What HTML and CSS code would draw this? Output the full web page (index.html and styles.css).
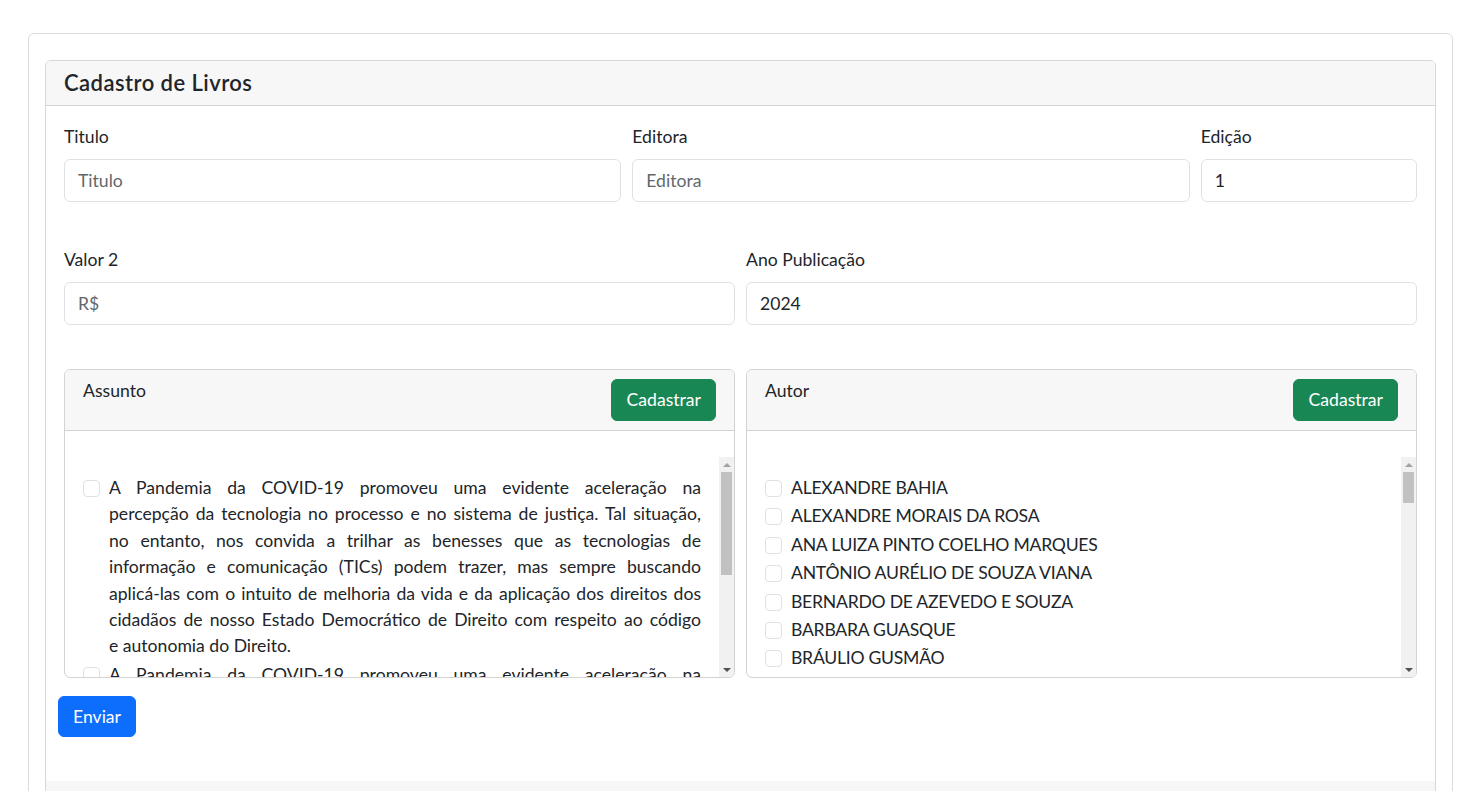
FILE: index.html
```html
<!DOCTYPE html>
<html lang="pt-BR">
<head>
<meta charset="utf-8">
<title>Cadastro de Livros</title>
<link rel="stylesheet" href="styles.css">
</head>
<body>
<div class="outer">
  <div class="card">
    <div class="card-header"><h5 class="title">Cadastro de Livros</h5></div>
    <div class="card-body">
      <div class="row">
        <div class="col c5">
          <label class="lbl">Titulo</label>
          <input class="ctl" type="text" placeholder="Titulo">
        </div>
        <div class="col c5">
          <label class="lbl">Editora</label>
          <input class="ctl" type="text" placeholder="Editora">
        </div>
        <div class="col c2">
          <label class="lbl">Edição</label>
          <input class="ctl" type="text" value="1">
        </div>
      </div>
      <div class="row">
        <div class="col c6">
          <label class="lbl">Valor 2</label>
          <input class="ctl" type="text" placeholder="R$">
        </div>
        <div class="col c6">
          <label class="lbl">Ano Publicação</label>
          <input class="ctl" type="text" value="2024">
        </div>
      </div>
      <div class="row lists">
        <div class="col c6">
          <div class="sub">
            <div class="sub-header">
              <span class="sub-title">Assunto</span>
              <button class="btn btn-green" type="button">Cadastrar</button>
            </div>
            <div class="sub-body">
              <div class="scroll-wrap">
                <div class="scroll">
                  <label class="check"><span class="box"></span><span class="txt"><span class="ln">A Pandemia da COVID-19 promoveu uma evidente aceleração na</span><span class="ln">percepção da tecnologia no processo e no sistema de justiça. Tal situação,</span><span class="ln">no entanto, nos convida a trilhar as benesses que as tecnologias de</span><span class="ln">informação e comunicação (TICs) podem trazer, mas sempre buscando</span><span class="ln">aplicá-las com o intuito de melhoria da vida e da aplicação dos direitos dos</span><span class="ln">cidadãos de nosso Estado Democrático de Direito com respeito ao código</span><span class="ln last">e autonomia do Direito.</span></span></label>
                  <label class="check"><span class="box"></span><span class="txt"><span class="ln">A Pandemia da COVID-19 promoveu uma evidente aceleração na</span><span class="ln">percepção da tecnologia no processo e no sistema de justiça. Tal situação,</span><span class="ln">no entanto, nos convida a trilhar as benesses que as tecnologias de</span><span class="ln">informação e comunicação (TICs) podem trazer, mas sempre buscando</span><span class="ln">aplicá-las com o intuito de melhoria da vida e da aplicação dos direitos dos</span><span class="ln">cidadãos de nosso Estado Democrático de Direito com respeito ao código</span><span class="ln last">e autonomia do Direito.</span></span></label>
                </div>
                <div class="vbar">
                  <span class="arrow up"></span>
                  <span class="thumb" style="height: 103px"></span>
                  <span class="track-fill"></span>
                  <span class="arrow down"></span>
                </div>
              </div>
            </div>
          </div>
        </div>
        <div class="col c6">
          <div class="sub">
            <div class="sub-header">
              <span class="sub-title">Autor</span>
              <button class="btn btn-green" type="button">Cadastrar</button>
            </div>
            <div class="sub-body">
              <div class="scroll-wrap">
                <div class="scroll names">
                  <label class="check"><span class="box"></span><span class="txt">ALEXANDRE BAHIA</span></label>
                  <label class="check"><span class="box"></span><span class="txt">ALEXANDRE MORAIS DA ROSA</span></label>
                  <label class="check"><span class="box"></span><span class="txt">ANA LUIZA PINTO COELHO MARQUES</span></label>
                  <label class="check"><span class="box"></span><span class="txt">ANTÔNIO AURÉLIO DE SOUZA VIANA</span></label>
                  <label class="check"><span class="box"></span><span class="txt">BERNARDO DE AZEVEDO E SOUZA</span></label>
                  <label class="check"><span class="box"></span><span class="txt">BARBARA GUASQUE</span></label>
                  <label class="check"><span class="box"></span><span class="txt">BRÁULIO GUSMÃO</span></label>
                  <label class="check"><span class="box"></span><span class="txt">CARLOS EDUARDO RIOS DO AMARAL</span></label>
                  <label class="check"><span class="box"></span><span class="txt">CAROLINA FERNANDES</span></label>
                  <label class="check"><span class="box"></span><span class="txt">CLÁUDIO LOPES</span></label>
                  <label class="check"><span class="box"></span><span class="txt">DANIEL BECKER</span></label>
                  <label class="check"><span class="box"></span><span class="txt">DIERLE NUNES</span></label>
                  <label class="check"><span class="box"></span><span class="txt">EDUARDO MAGRANI</span></label>
                  <label class="check"><span class="box"></span><span class="txt">ERIK NAVARRO WOLKART</span></label>
                  <label class="check"><span class="box"></span><span class="txt">FABIANO HARTMANN PEIXOTO</span></label>
                  <label class="check"><span class="box"></span><span class="txt">FERNANDA BRAGANÇA</span></label>
                  <label class="check"><span class="box"></span><span class="txt">FLÁVIO LUIZ YARSHELL</span></label>
                  <label class="check"><span class="box"></span><span class="txt">GABRIELA BUARQUE</span></label>
                  <label class="check"><span class="box"></span><span class="txt">GUSTAVO OSNA</span></label>
                  <label class="check"><span class="box"></span><span class="txt">HENRIQUE ALVES PINTO</span></label>
                  <label class="check"><span class="box"></span><span class="txt">ISABELA FERRARI</span></label>
                  <label class="check"><span class="box"></span><span class="txt">JANAÍNA ROLAND</span></label>
                  <label class="check"><span class="box"></span><span class="txt">JORDI NIEVA FENOLL</span></label>
                  <label class="check"><span class="box"></span><span class="txt">JOSÉ FERNANDO SIMÃO</span></label>
                  <label class="check"><span class="box"></span><span class="txt">JULIANA ABRUSIO</span></label>
                  <label class="check"><span class="box"></span><span class="txt">LEONARDO NETTO PARENTONI</span></label>
                  <label class="check"><span class="box"></span><span class="txt">LUIZ FUX</span></label>
                  <label class="check"><span class="box"></span><span class="txt">MARCO AURÉLIO CASTRO</span></label>
                  <label class="check"><span class="box"></span><span class="txt">MARIA CRISTINA VIEIRA</span></label>
                  <label class="check"><span class="box"></span><span class="txt">MARCUS VINICIUS PORTO</span></label>
                  <label class="check"><span class="box"></span><span class="txt">NATHALIA BAPTISTA</span></label>
                  <label class="check"><span class="box"></span><span class="txt">PAULO CEZAR NEVES JUNIOR</span></label>
                  <label class="check"><span class="box"></span><span class="txt">PEDRO FELIPE DE OLIVEIRA</span></label>
                  <label class="check"><span class="box"></span><span class="txt">RENATA SANTOS</span></label>
                  <label class="check"><span class="box"></span><span class="txt">RICARDO VILLAS BÔAS CUEVA</span></label>
                  <label class="check"><span class="box"></span><span class="txt">RODRIGO FUX</span></label>
                  <label class="check"><span class="box"></span><span class="txt">SÉRGIO RODAS</span></label>
                  <label class="check"><span class="box"></span><span class="txt">TAINÁ AGUIAR JUNQUILHO</span></label>
                  <label class="check"><span class="box"></span><span class="txt">TRÍCIA NAVARRO XAVIER CABRAL</span></label>
                  <label class="check"><span class="box"></span><span class="txt">VALTER SHUENQUENER DE ARAÚJO</span></label>
                  <label class="check"><span class="box"></span><span class="txt">VICTOR HUGO PAVONI</span></label>
                  <label class="check"><span class="box"></span><span class="txt">WILSON ENGELMANN</span></label>
                  <label class="check"><span class="box"></span><span class="txt">YURI FERREIRA</span></label>
                  <label class="check"><span class="box"></span><span class="txt">ZULMAR FACHIN</span></label>
                </div>
                <div class="vbar">
                  <span class="arrow up"></span>
                  <span class="thumb" style="height: 31px"></span>
                  <span class="track-fill"></span>
                  <span class="arrow down"></span>
                </div>
              </div>
            </div>
          </div>
        </div>
      </div>
      <button class="btn btn-blue" type="submit">Enviar</button>
    </div>
    <div class="card-footer"></div>
  </div>
</div>
</body>
</html>
```

FILE: styles.css
```css
html {
  overflow: hidden;
}
body {
  margin: 0;
  font-family: Lato, "Noto Sans", "Liberation Sans", sans-serif;
  font-size: 16px;
  line-height: 1.5;
  color: #212529;
  background: #fff;
}
.outer {
  margin: 33px 0 0 28px;
  width: 1425px;
  box-sizing: border-box;
  border: 1px solid #dadcde;
  border-radius: 6px;
  padding: 26px 16px 16px;
}
.card {
  border: 1px solid #d6d7d8;
  border-radius: 6px;
  overflow: hidden;
}
.card-header {
  background: #f7f7f7;
  border-bottom: 1px solid #d3d3d4;
  padding: 8px 18px;
  height: 45px;
  box-sizing: border-box;
  display: flex;
  align-items: center;
}
.title {
  margin: 0;
  font-size: 22px;
  font-weight: 600;
  letter-spacing: 0.45px;
  line-height: 1.2;
}
.card-body {
  padding: 18px 18px 44px;
}
.card-footer {
  background: #f7f7f7;
  height: 40px;
}
.row {
  display: flex;
  gap: 11px;
  margin-bottom: 45px;
}
.row + .row {
  margin-bottom: 44px;
}
.row.lists {
  margin-bottom: 18px;
}
.col {
  min-width: 0;
}
.c5 { width: calc((100% + 11px) * 5 / 12 - 11px); }
.c2 { width: calc((100% + 11px) * 2 / 12 - 11px); }
.c6 { width: calc((100% + 11px) * 6 / 12 - 11px); }
.lbl {
  display: block;
  font-size: 17.6px;
  line-height: 26px;
  margin-bottom: 9px;
}
.ctl {
  display: block;
  width: 100%;
  box-sizing: border-box;
  height: 43px;
  padding: 0 13px;
  font-family: inherit;
  font-size: 17.6px;
  color: #212529;
  background: #fff;
  border: 1px solid #dee2e6;
  border-radius: 6px;
  outline: none;
}
.ctl::placeholder {
  color: #62676c;
}
.sub {
  border: 1px solid #d3d3d4;
  border-radius: 6px;
  overflow: hidden;
}
.sub-header {
  background: #f7f7f7;
  border-bottom: 1px solid #d3d3d4;
  padding: 9px 18px;
  display: flex;
  justify-content: space-between;
  align-items: flex-start;
}
.sub-title {
  font-size: 17.6px;
  line-height: 24px;
}
.btn {
  font-family: inherit;
  font-size: 17.6px;
  line-height: 26px;
  color: #fff;
  border: 1px solid transparent;
  border-radius: 6px;
  padding: 7px 14px 7px 15px;
  cursor: pointer;
}
.btn-green {
  background: #198754;
  border-color: #198754;
}
.btn-blue {
  background: #0d6efd;
  border-color: #0d6efd;
  margin-left: -6px;
  padding: 7px 14px 6px;
}
.sub-body {
  padding-top: 26px;
}
.scroll-wrap {
  display: flex;
  height: 220px;
}
.scroll {
  flex: 1;
  min-width: 0;
  overflow-y: auto;
  scrollbar-width: none;
  padding: 18px 18px 0;
}
.scroll::-webkit-scrollbar {
  display: none;
}
.vbar {
  flex: none;
  width: 15px;
  background: #f1f1f1;
  display: flex;
  flex-direction: column;
}
.arrow {
  flex: none;
  height: 15px;
  display: flex;
  align-items: center;
  justify-content: center;
}
.arrow::before {
  content: "";
  width: 0;
  height: 0;
  border-left: 4px solid transparent;
  border-right: 4px solid transparent;
}
.arrow.up::before {
  border-bottom: 4px solid #a3a3a3;
}
.arrow.down::before {
  border-top: 4px solid #505050;
}
.thumb {
  flex: none;
  margin: 0 2px;
  background: #c1c1c1;
}
.track-fill {
  flex: 1;
}
.check {
  display: flex;
  align-items: flex-start;
  font-size: 17.6px;
  line-height: 26.4px;
  margin-bottom: 2px;
}
.names .txt {
  letter-spacing: -0.25px;
}
.box {
  flex: none;
  width: 17px;
  height: 17px;
  box-sizing: border-box;
  border: 1px solid #dee2e6;
  border-radius: 4px;
  margin-top: 5px;
  margin-right: 9px;
  background: #fff;
}
.txt {
  flex: 1;
  min-width: 0;
}
.ln {
  display: block;
  text-align: justify;
  text-align-last: justify;
}
.ln.last {
  text-align-last: left;
}
```
